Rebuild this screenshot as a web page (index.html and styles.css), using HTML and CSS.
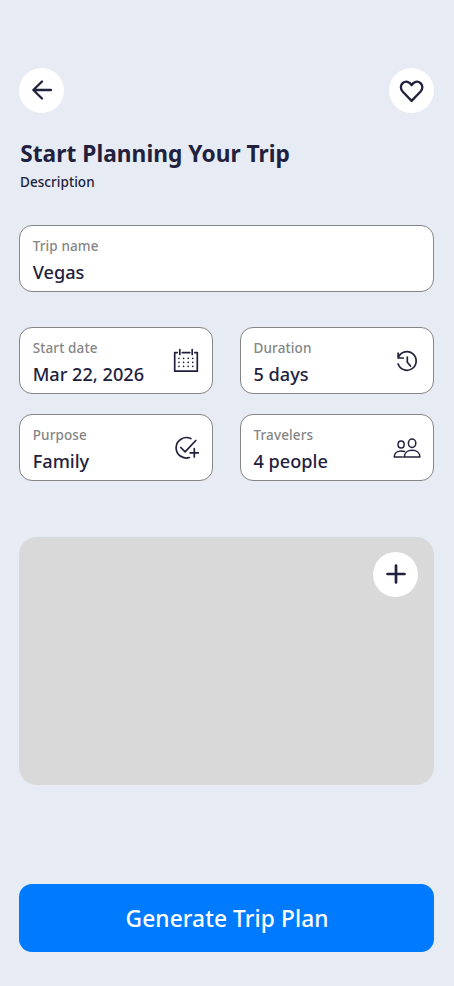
FILE: index.html
```
<!DOCTYPE html>
<html lang="en">
<head>
<meta charset="utf-8">
<title>Start Planning Your Trip</title>
<link rel="stylesheet" href="styles.css">
</head>
<body>
<main class="screen">
  <header class="topbar">
    <button class="round" aria-label="Back">
      <svg width="45" height="45" viewBox="0 0 45 45"><path d="M32 22H14.5M23 13.5l-8.7 8.5L23 30.5"/></svg>
    </button>
    <button class="round" aria-label="Save">
      <svg width="45" height="45" viewBox="0 0 45 45"><path d="M22.6 32.9L13.8 23.8C11 20.8 11.4 17 13.8 15C16.5 12.8 20.5 13.4 22.6 17.1C24.7 13.4 28.7 12.8 31.4 15C33.8 17 34.2 20.8 31.4 23.8Z"/></svg>
    </button>
  </header>
  <h1 class="title">Start Planning Your Trip</h1>
  <p class="description">Description</p>
  <section class="field field-name">
    <div><div class="label">Trip name</div><div class="value">Vegas</div></div>
  </section>
  <section class="fields">
    <div class="field">
      <div><div class="label">Start date</div><div class="value">Mar 22, 2026</div></div>
      <svg class="icon" width="26" height="26" viewBox="0 0 26 26"><path d="M4.2 4.6H1.7V23.2H24.3V4.6H21.8M9.3 4.6h7.5M6.8 1.5v5M19.2 1.5v5"/><path class="dots" d="M6 10.3h16M6 14.3h16M6 18.3h16"/></svg>
    </div>
    <div class="field">
      <div><div class="label">Duration</div><div class="value">5 days</div></div>
      <svg class="icon" width="26" height="26" viewBox="0 0 26 26"><path d="M4.5 8.9A9.3 9.3 0 1 1 4.1 16M4.1 5v5h5.2M13.3 9v5.2l3.2 3.8"/></svg>
    </div>
    <div class="field">
      <div><div class="label">Purpose</div><div class="value">Family</div></div>
      <svg class="icon" width="26" height="26" viewBox="0 0 26 26"><path d="M17.8 3.6A10.2 10.2 0 1 0 16.4 22.5M7.8 12.5l4.3 4.3L22.8 5.5M21.3 13.7v8.3M17.2 17.9h8.3"/></svg>
    </div>
    <div class="field">
      <div><div class="label">Travelers</div><div class="value">4 people</div></div>
      <svg class="icon icon-people" width="28" height="26" viewBox="0 0 28 26"><path class="thin" d="M10.5 22H11.4C11.4 17.8 14.7 15.3 19.1 15.3S26.9 17.8 26.9 22ZM1.2 22H9.2M1.2 22C1.2 18.4 4.1 15.9 8.3 15.9Q9.9 15.9 11.5 16.5"/><ellipse class="thin" cx="19.1" cy="8.3" rx="3.7" ry="4.2"/><ellipse class="thin" cx="8.1" cy="9.6" rx="3.1" ry="3.5"/></svg>
    </div>
  </section>
  <section class="photo">
    <button class="round" aria-label="Add">
      <svg width="45" height="45" viewBox="0 0 45 45"><path class="plus" d="M23 13.5v17M14.5 22h17"/></svg>
    </button>
  </section>
  <button class="generate">Generate Trip Plan</button>
</main>
</body>
</html>
```
FILE: styles.css
```
* { box-sizing: border-box; }
body {
  margin: 0;
  background: #e6ebf4;
  color: #22213d;
  font-family: "Noto Sans", "Open Sans", sans-serif;
}
button { border: 0; padding: 0; font: inherit; }
.screen {
  display: flex;
  flex-direction: column;
  height: 986px;
  padding: 67.6px 20px 0 19.2px;
}
.topbar { display: flex; justify-content: space-between; }
.round {
  width: 45px;
  height: 45px;
  border-radius: 50%;
  background: #fff;
}
svg {
  display: block;
  fill: none;
  stroke: #22213d;
  stroke-width: 1.7;
  stroke-linecap: round;
  stroke-linejoin: round;
}
.round svg { stroke-width: 2.3; }
.round .plus { stroke-width: 2.7; }
.title {
  margin: 25px 0 0 1px;
  font-size: 22.7px;
  font-weight: 700;
  line-height: 32px;
  letter-spacing: 0.04px;
  white-space: nowrap;
}
.description {
  margin: 3.3px 0 0 0.8px;
  font-size: 13.5px;
  font-weight: 500;
  line-height: 18px;
  letter-spacing: 0.06px;
}
.field {
  display: flex;
  justify-content: space-between;
  height: 67px;
  padding: 11px 13px 0 12.5px;
  border: 1px solid #858585;
  border-radius: 13px;
  background: #fff;
}
.field-name { margin-top: 34px; }
.label {
  color: #858585;
  font-size: 13.5px;
  font-weight: 500;
  line-height: 18px;
  letter-spacing: 0.12px;
}
.value {
  margin-top: 4px;
  font-size: 18.15px;
  font-weight: 500;
  line-height: 26px;
  white-space: nowrap;
}
.fields {
  display: grid;
  grid-template-columns: 194px 194px;
  justify-content: space-between;
  row-gap: 20px;
  margin-top: 35.4px;
}
.icon { margin-top: 9px; }
.icon-people { margin-right: -0.5px; }
.icon .dots { stroke-width: 1.7; stroke-dasharray: 0 4.6; }
.icon .thin { stroke-width: 1.5; }
.photo {
  display: flex;
  justify-content: flex-end;
  height: 248px;
  margin-top: 55.5px;
  padding: 14.8px 16px;
  border-radius: 18px;
  background: #d9d9d9;
}
.generate {
  height: 68px;
  margin-top: 99.2px;
  padding: 1.5px 0 0 1px;
  border-radius: 13px;
  background: #007aff;
  color: #fff;
  font-size: 22.7px;
  font-weight: 500;
  letter-spacing: 0.12px;
}
```
